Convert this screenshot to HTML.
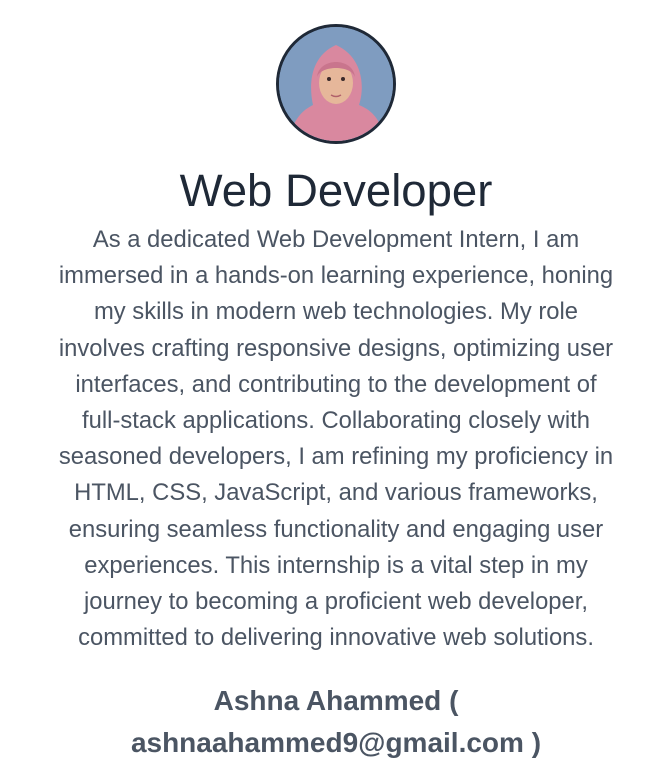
<!DOCTYPE html>
<html><head><meta charset="utf-8"><style>
html,body{margin:0;padding:0;background:#fff;width:672px;height:774px;overflow:hidden}
body{font-family:"Liberation Sans",sans-serif;text-align:center}
.av{position:absolute;left:276px;top:24px;width:114px;height:114px;border:3px solid #1f2937;border-radius:50%;overflow:hidden;background:#7f9cc0}
h1{position:absolute;left:0;right:0;top:165px;margin:0;font-size:45.5px;line-height:52px;font-weight:500;color:#1f2937}
p{position:absolute;left:0;right:0;top:222px;margin:0;font-size:23.8px;line-height:36.2px;color:#4b5563;white-space:nowrap}
.n{position:absolute;left:0;right:0;top:680px;margin:0;font-size:28px;line-height:42px;font-weight:bold;color:#4b5563;white-space:nowrap}
</style></head><body>
<div class="av"><svg width="114" height="114" viewBox="0 0 114 114">
<rect width="114" height="114" fill="#7f9cc0"/>
<path d="M10 114 C14 90 26 82 34 78 C30 60 30 30 57 18 C84 30 86 60 80 78 C90 82 102 90 106 114Z" fill="#d9889f"/>
<ellipse cx="57" cy="56" rx="17" ry="21" fill="#e6b79a"/>
<path d="M38 50 C40 30 74 30 76 50 C72 38 42 38 38 50Z" fill="#c9758d"/>
<circle cx="50" cy="52" r="2" fill="#3a2a2a"/><circle cx="64" cy="52" r="2" fill="#3a2a2a"/>
<path d="M52 68 Q57 71 62 68" stroke="#b0606a" stroke-width="1.5" fill="none"/>
<path d="M40 70 C44 86 70 86 74 70 C78 90 70 100 57 102 C44 100 36 90 40 70Z" fill="#d9889f"/>
</svg></div>
<h1>Web Developer</h1>
<p>As a dedicated Web Development Intern, I am<br>immersed in a hands-on learning experience, honing<br>my skills in modern web technologies. My role<br>involves crafting responsive designs, optimizing user<br>interfaces, and contributing to the development of<br>full-stack applications. Collaborating closely with<br>seasoned developers, I am refining my proficiency in<br>HTML, CSS, JavaScript, and various frameworks,<br>ensuring seamless functionality and engaging user<br>experiences. This internship is a vital step in my<br>journey to becoming a proficient web developer,<br>committed to delivering innovative web solutions.</p>
<div class="n">Ashna Ahammed (<br>ashnaahammed9@gmail.com )</div>
</body></html>
